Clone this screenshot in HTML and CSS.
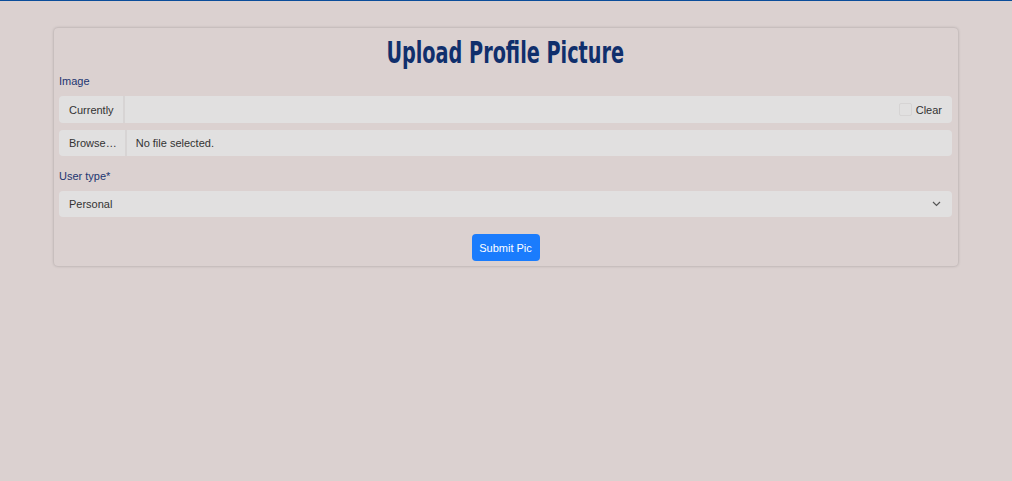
FILE: index.html
```html
<!DOCTYPE html>
<html>
<head>
<meta charset="utf-8">
<link rel="stylesheet" href="styles.css">
</head>
<body>
<div class="topline"></div>
<main class="page">
  <section class="card">
    <h1 class="title"><span class="title-text">Upload Profile Picture</span></h1>
    <form class="form">
      <div class="label label-image">Image</div>
      <div class="group">
        <span class="prefix">Currently</span>
        <span class="fill"></span>
        <span class="clear"><span class="check"></span>Clear</span>
      </div>
      <div class="group group-file">
        <span class="prefix prefix-browse">Browse…</span>
        <span class="filename">No file selected.</span>
      </div>
      <div class="label label-type">User type*</div>
      <div class="select">
        <span>Personal</span>
        <svg class="chev" width="9" height="6" viewBox="0 0 9 6"><path d="M1 1l3.5 3.5L8 1" fill="none" stroke="#555" stroke-width="1.2"/></svg>
      </div>
      <div class="actions">
        <button type="button" class="btn">Submit Pic</button>
      </div>
    </form>
  </section>
</main>
</body>
</html>
```
FILE: styles.css
```css
html, body {
  margin: 0;
  padding: 0;
}
body {
  background: #dbd1d0;
  font-family: "Liberation Sans", Arial, sans-serif;
  font-size: 11px;
  color: #333;
  height: 481px;
}
.topline {
  height: 1px;
  background: #0b4d9a;
}
.page {
  padding: 27px 54px 0 54px;
}
.card {
  border-radius: 4px;
  box-shadow: 0 0 3px rgba(0, 0, 0, 0.25);
  padding: 0 6px 5px 5px;
  background: #dbd1d0;
}
.title {
  margin: 0;
  padding-top: 7px;
  height: 39px;
  text-align: center;
  font-family: "DejaVu Sans Condensed", sans-serif;
  font-weight: bold;
  font-size: 31px;
  line-height: 34px;
  color: #102f6c;
}
.title-text {
  display: inline-block;
  transform: scaleX(0.69);
}
.form {
  display: flex;
  flex-direction: column;
}
.label {
  line-height: 13px;
  color: #1c3570;
}
.label-image {
  margin-top: 1px;
  margin-bottom: 8px;
}
.label-type {
  margin-top: 14px;
  margin-bottom: 8px;
}
.group {
  display: flex;
  align-items: stretch;
  height: 27px;
  background: #e1e0e0;
  border-radius: 4px;
  margin-bottom: 7px;
}
.group-file {
  height: 26px;
  margin-bottom: 0;
}
.prefix {
  display: flex;
  align-items: center;
  padding: 0 9px 0 10px;
  border-right: 2px solid #d7d4d4;
  color: #333;
}
.prefix-browse {
  padding-right: 8px;
}
.fill {
  flex: 1;
}
.clear {
  display: flex;
  align-items: center;
  padding-right: 10px;
  color: #333;
}
.check {
  width: 11px;
  height: 11px;
  border: 1px solid #d6d4d4;
  border-radius: 2px;
  margin-right: 4px;
}
.filename {
  display: flex;
  align-items: center;
  padding-left: 9px;
}
.select {
  display: flex;
  align-items: center;
  justify-content: space-between;
  height: 26px;
  background: #e1e0e0;
  border-radius: 4px;
  padding: 0 11px 0 10px;
  color: #333;
}
.chev {
  display: block;
}
.actions {
  display: flex;
  justify-content: center;
  padding-top: 17px;
}
.btn {
  width: 68px;
  height: 27px;
  border: none;
  border-radius: 4px;
  background: #1a7cfd;
  color: #fff;
  font-family: "Liberation Sans", Arial, sans-serif;
  font-size: 11px;
  padding: 0;
}
```
